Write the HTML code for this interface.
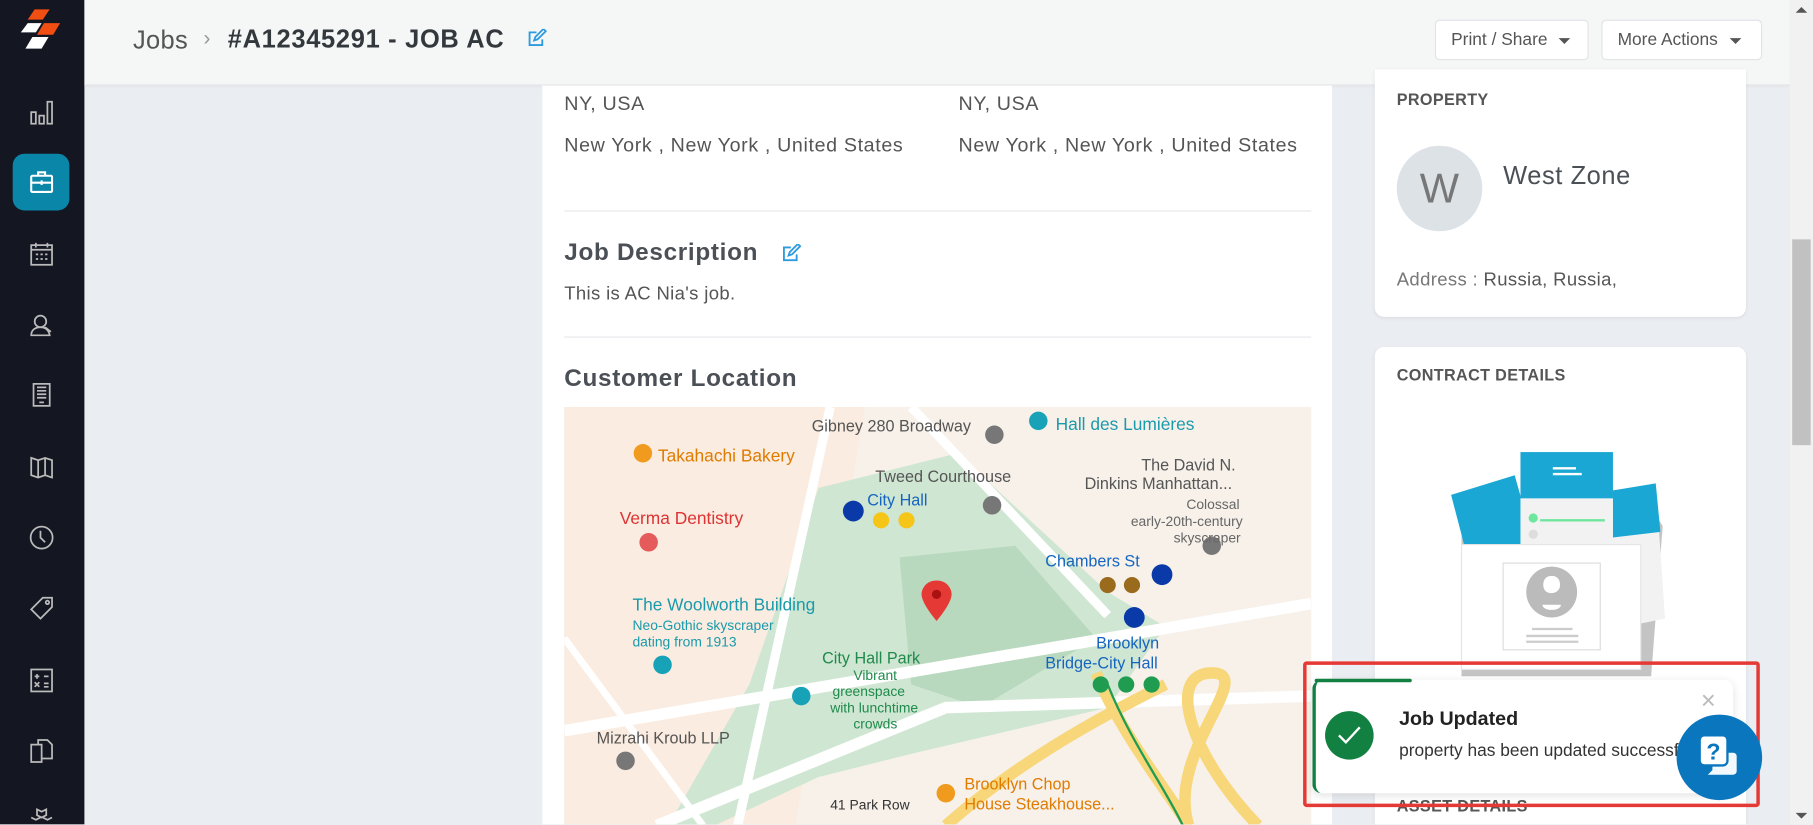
<!DOCTYPE html>
<html><head><meta charset="utf-8"><style>
*{box-sizing:border-box;margin:0;padding:0}
html,body{width:1813px;height:825px;overflow:hidden;background:#eaedf1;font-family:"Liberation Sans",sans-serif}
#o{position:relative;width:1813px;height:825px;overflow:hidden}
#w{position:absolute;left:0;top:0;width:1568px;height:713px;transform:scale(1.15625);transform-origin:0 0;background:#eaedf1;letter-spacing:.3px;overflow:hidden}
.a{position:absolute}
.sb{left:0;top:0;width:73px;height:713px;background:#141722}
.ic{position:absolute;left:25px;width:22px;height:22px}
.hd{left:73px;top:0;width:1475px;height:74px;background:#f5f6f6;border-bottom:1px solid #e2e5e8;box-shadow:0 1px 3px rgba(0,0,0,.05)}
.btn{top:17px;height:35px;background:#fff;border:1px solid #e1e3e6;border-radius:4px;font-size:15px;color:#555;line-height:33px;padding-left:13px;letter-spacing:0}
.car{display:inline-block;border-left:5px solid transparent;border-right:5px solid transparent;border-top:5px solid #555;vertical-align:middle;margin-left:10px}
.t{font-size:17px;color:#555;letter-spacing:.55px}
.h2{font-size:21px;font-weight:bold;color:#4b5056;letter-spacing:.6px}
.card{background:#fff;border-radius:8px;box-shadow:0 1px 3px rgba(0,0,0,.08)}
.ml{position:absolute;font-size:13px;white-space:nowrap;letter-spacing:0}
</style></head><body><div id="o"><div id="w">
<div class="a sb">
 <svg class="a" style="left:16px;top:8px" width="40" height="40" viewBox="0 0 40 40"><polygon points="14,0 27,0 21,9 8,9" fill="#f04e12"/><polygon points="22,12 36,12 30,22 16,22" fill="#f04e12"/><polygon points="8,12 20,12 15,20 2,20" fill="#fff"/><polygon points="12,24 26,24 20,34 6,34" fill="#fff"/></svg>
 <svg class="ic" style="top:86px" viewBox="0 0 22 22" fill="none" stroke="#bbb" stroke-width="1.5"><rect x="2" y="11" width="4" height="10"/><rect x="9" y="14" width="4" height="7"/><rect x="16" y="2" width="4" height="19"/></svg>
 <div class="a" style="left:11px;top:133px;width:49px;height:49px;background:#0a86a8;border-radius:10px"></div>
 <svg class="ic" style="top:146px;left:25px" viewBox="0 0 22 22" fill="none" stroke="#fff" stroke-width="1.8"><rect x="2" y="6" width="18" height="14" rx="1"/><path d="M8 6V3h6v3M2 12h18M11 10v4"/></svg>
 <svg class="ic" style="top:208px" viewBox="0 0 22 22" fill="none" stroke="#bbb" stroke-width="1.5"><rect x="2" y="4" width="18" height="17"/><path d="M6 2v4M16 2v4M2 8h18"/><path d="M6 12h2M10 12h2M14 12h2M6 16h2M10 16h2M14 16h2"/></svg>
 <svg class="ic" style="top:270px" viewBox="0 0 22 22" fill="none" stroke="#bbb" stroke-width="1.5"><circle cx="10" cy="8" r="5"/><path d="M2 20c0-5 4-7 8-7s7 2 8 7zM14 13l5 4"/></svg>
 <svg class="ic" style="top:330px" viewBox="0 0 22 22" fill="none" stroke="#bbb" stroke-width="1.5"><rect x="4" y="2" width="14" height="19"/><path d="M7 5h8M7 8h8M7 11h8M7 14h8M9 18h4"/></svg>
 <svg class="ic" style="top:392px" viewBox="0 0 22 22" fill="none" stroke="#bbb" stroke-width="1.5"><path d="M2 4l6 2 6-2 6 2v15l-6-2-6 2-6-2zM8 6v15M14 4v15"/></svg>
 <svg class="ic" style="top:454px" viewBox="0 0 22 22" fill="none" stroke="#bbb" stroke-width="1.5"><circle cx="11" cy="11" r="9.5"/><path d="M10 5v6l4 4"/></svg>
 <svg class="ic" style="top:515px" viewBox="0 0 22 22" fill="none" stroke="#bbb" stroke-width="1.5"><path d="M12 2h8v8L10 20 2 12z"/><circle cx="16" cy="6" r="1.5"/></svg>
 <svg class="ic" style="top:577px" viewBox="0 0 22 22" fill="none" stroke="#bbb" stroke-width="1.5"><rect x="2" y="2" width="18" height="19"/><path d="M5 8h4M7 6v4M13 8h4M5 13l4 4M9 13l-4 4M13 14h4M13 17h4"/></svg>
 <svg class="ic" style="top:638px" viewBox="0 0 22 22" fill="none" stroke="#bbb" stroke-width="1.5"><path d="M2 6h9v15H2zM8 6V2h8l4 4v12h-9"/></svg>
 <svg class="ic" style="top:698px" viewBox="0 0 22 22" fill="none" stroke="#bbb" stroke-width="1.5"><path d="M7 2l4 2 4-2v5l-4 2-4-2zM2 9l4 2 4-2M12 9l4 2 4-2"/></svg>
</div>
<div class="a hd">
 <div class="a" style="left:42px;top:22px;font-size:22px;color:#555">Jobs</div>
 <div class="a" style="left:103px;top:23px;font-size:18px;color:#999">›</div>
 <div class="a" style="left:124px;top:21px;font-size:22px;font-weight:bold;color:#33383d;letter-spacing:.6px">#A12345291 - JOB AC</div>
 <svg class="a" style="left:383px;top:25px" width="17" height="16" viewBox="0 0 17 16" fill="none" stroke="#2e9be0" stroke-width="1.6"><path d="M13 9v5H2V3h6"/><path d="M6 10l1-3 7-7 2 2-7 7z"/></svg>
</div>
<div class="a btn" style="left:1241px;width:133px">Print / Share<span class="car"></span></div>
<div class="a btn" style="left:1385px;width:139px">More Actions<span class="car"></span></div>
<div class="a" style="left:1548px;top:0;width:20px;height:713px;background:#f1f1f1"></div>
<div class="a" style="left:1550px;top:207px;width:16px;height:178px;background:#c1c1c1"></div>
<div class="a" style="left:1553px;top:6px;border-left:5px solid transparent;border-right:5px solid transparent;border-bottom:5px solid #555"></div>
<div class="a" style="left:1553px;top:703px;border-left:5px solid transparent;border-right:5px solid transparent;border-top:5px solid #555"></div>

<div class="a" style="left:469px;top:74px;width:683px;height:640px;background:#fff"></div>
<div class="a t" style="left:488px;top:80px">NY, USA</div>
<div class="a t" style="left:829px;top:80px">NY, USA</div>
<div class="a t" style="left:488px;top:116px">New York , New York , United States</div>
<div class="a t" style="left:829px;top:116px">New York , New York , United States</div>
<div class="a" style="left:488px;top:182px;width:646px;height:1px;background:#e6e8ea"></div>
<div class="a h2" style="left:488px;top:207px">Job Description</div>
<svg class="a" style="left:676px;top:211px" width="17" height="16" viewBox="0 0 17 16" fill="none" stroke="#2e9be0" stroke-width="1.6"><path d="M13 9v5H2V3h6"/><path d="M6 10l1-3 7-7 2 2-7 7z"/></svg>
<div class="a" style="left:488px;top:246px;font-size:16px;color:#555">This is AC Nia's job.</div>
<div class="a" style="left:488px;top:291px;width:646px;height:1px;background:#e6e8ea"></div>
<div class="a h2" style="left:488px;top:316px">Customer Location</div>

<div class="a" style="left:488px;top:352px;width:646px;height:362px;background:#f3eee8;overflow:hidden">
 <svg class="a" style="left:0;top:0" width="646" height="362">
  <rect width="646" height="362" fill="#f7f1ea"/>
  <polygon points="0,0 260,0 200,362 0,362" fill="#fbe9d8" opacity=".6"/>
  <polygon points="220,70 340,40 470,160 520,190 470,260 300,300 220,320 130,362 90,362 160,240" fill="#cfe6d2"/>
  <polygon points="290,130 390,120 460,200 360,260 300,240" fill="#b9d9bf"/>
  <path d="M0,280 L646,170" stroke="#fff" stroke-width="10"/>
  <path d="M80,362 L330,260 L646,250" stroke="#fff" stroke-width="10" fill="none"/>
  <path d="M230,0 L150,362" stroke="#fff" stroke-width="8"/>
  <path d="M300,0 L470,180" stroke="#fff" stroke-width="8"/>
  <path d="M0,200 L120,362" stroke="#fff" stroke-width="6"/>
  <path d="M330,362 C400,300 480,260 520,240" stroke="#f7d77a" stroke-width="10" fill="none"/>
  <path d="M540,362 C520,300 600,230 560,230 C520,230 540,300 600,362" stroke="#f7d77a" stroke-width="10" fill="none"/>
  <path d="M460,230 C480,280 520,330 540,362" stroke="#f7d77a" stroke-width="10" fill="none"/>
  <path d="M470,240 C490,290 520,330 535,362" stroke="#1f9c50" stroke-width="2" fill="none"/>
  <path d="M322,150 c-9,0-13,7-13,12 0,8 13,23 13,23s13-15 13-23c0-5-4-12-13-12z" fill="#e53935"/>
  <circle cx="322" cy="162" r="4" fill="#a11"/>
  <circle cx="68" cy="40" r="8" fill="#f09a1e"/><circle cx="73" cy="117" r="8" fill="#e55a5a"/>
  <circle cx="85" cy="223" r="8" fill="#17a2b8"/><circle cx="205" cy="250" r="8" fill="#17a2b8"/>
  <circle cx="53" cy="306" r="8" fill="#777"/><circle cx="372" cy="24" r="8" fill="#777"/><circle cx="370" cy="85" r="8" fill="#777"/>
  <circle cx="410" cy="12" r="8" fill="#17a2b8"/><circle cx="560" cy="120" r="8" fill="#777"/><circle cx="330" cy="334" r="8" fill="#f09a1e"/>
  <circle cx="250" cy="90" r="9" fill="#0a3aa8"/><circle cx="274" cy="98" r="7" fill="#f5c518"/><circle cx="296" cy="98" r="7" fill="#f5c518"/>
  <circle cx="470" cy="154" r="7" fill="#9a6a1d"/><circle cx="491" cy="154" r="7" fill="#9a6a1d"/><circle cx="517" cy="145" r="9" fill="#0a3aa8"/><circle cx="493" cy="182" r="9" fill="#0a3aa8"/>
  <circle cx="464" cy="240" r="7" fill="#1f9c50"/><circle cx="486" cy="240" r="7" fill="#1f9c50"/><circle cx="508" cy="240" r="7" fill="#1f9c50"/>
 </svg>
 <div class="ml" style="left:81px;top:34px;color:#e07b00;font-size:15px">Takahachi Bakery</div>
 <div class="ml" style="left:214px;top:8px;color:#555;font-size:14px">Gibney 280 Broadway</div>
 <div class="ml" style="left:425px;top:7px;color:#1a9aab;font-size:15px">Hall des Lumières</div>
 <div class="ml" style="left:269px;top:52px;color:#555;font-size:14px">Tweed Courthouse</div>
 <div class="ml" style="left:262px;top:72px;color:#1565c0;font-size:14px">City Hall</div>
 <div class="ml" style="left:499px;top:42px;color:#555;font-size:14px">The David N.</div>
 <div class="ml" style="left:450px;top:58px;color:#555;font-size:14px">Dinkins Manhattan...</div>
 <div class="ml" style="left:538px;top:77px;color:#666;font-size:12px">Colossal</div>
 <div class="ml" style="left:490px;top:92px;color:#666;font-size:12px">early-20th-century</div>
 <div class="ml" style="left:527px;top:106px;color:#666;font-size:12px">skyscraper</div>
 <div class="ml" style="left:48px;top:88px;color:#d33;font-size:15px">Verma Dentistry</div>
 <div class="ml" style="left:416px;top:125px;color:#1565c0;font-size:14px">Chambers St</div>
 <div class="ml" style="left:59px;top:163px;color:#1a9aab;font-size:15px">The Woolworth Building</div>
 <div class="ml" style="left:59px;top:182px;color:#1a9aab;font-size:12px">Neo-Gothic skyscraper</div>
 <div class="ml" style="left:59px;top:196px;color:#1a9aab;font-size:12px">dating from 1913</div>
 <div class="ml" style="left:460px;top:196px;color:#1565c0;font-size:14px">Brooklyn</div>
 <div class="ml" style="left:416px;top:213px;color:#1565c0;font-size:14px">Bridge-City Hall</div>
 <div class="ml" style="left:223px;top:209px;color:#1f8a4c;font-size:14px">City Hall Park</div>
 <div class="ml" style="left:250px;top:225px;color:#1f8a4c;font-size:12px">Vibrant</div>
 <div class="ml" style="left:232px;top:239px;color:#1f8a4c;font-size:12px">greenspace</div>
 <div class="ml" style="left:230px;top:253px;color:#1f8a4c;font-size:12px">with lunchtime</div>
 <div class="ml" style="left:250px;top:267px;color:#1f8a4c;font-size:12px">crowds</div>
 <div class="ml" style="left:28px;top:278px;color:#555;font-size:14px">Mizrahi Kroub LLP</div>
 <div class="ml" style="left:230px;top:337px;color:#333;font-size:12px">41 Park Row</div>
 <div class="ml" style="left:346px;top:318px;color:#e07b00;font-size:14px">Brooklyn Chop</div>
 <div class="ml" style="left:346px;top:335px;color:#e07b00;font-size:14px">House Steakhouse...</div>
</div>

<div class="a card" style="left:1189px;top:60px;width:321px;height:214px;border-radius:0 0 8px 8px"></div>
<div class="a" style="left:1208px;top:78px;font-size:14px;font-weight:bold;color:#555">PROPERTY</div>
<div class="a" style="left:1208px;top:126px;width:74px;height:74px;border-radius:50%;background:#dde2e7;color:#777;font-size:36px;text-align:center;line-height:74px">W</div>
<div class="a" style="left:1300px;top:139px;font-size:22px;color:#4b5056;letter-spacing:.5px">West Zone</div>
<div class="a" style="left:1208px;top:234px;font-size:16px;color:#555"><span style="color:#777">Address :</span> Russia, Russia,</div>
<div class="a card" style="left:1189px;top:300px;width:321px;height:430px"></div>
<div class="a" style="left:1208px;top:316px;font-size:14px;font-weight:bold;color:#555">CONTRACT DETAILS</div>
<svg class="a" style="left:1250px;top:385px" width="195" height="200" viewBox="0 0 195 200">
 <polygon points="14,57 180,57 188,70 178,200 14,200" fill="#c4c4c4"/>
 <polygon points="5,43 60,26 78,90 22,108" fill="#1aa7d4"/>
 <polygon points="140,40 182,33 190,150 150,158" fill="#f2f2f2"/><polygon points="140,40 182,33 186,75 144,80" fill="#1aa7d4"/>
 <rect x="65" y="6" width="80" height="130" fill="#f2f2f2"/><rect x="65" y="6" width="80" height="40" fill="#1aa7d4"/>
 <path d="M93 20h20M93 25h25" stroke="#fff" stroke-width="2"/>
 <circle cx="76" cy="63" r="4" fill="#6ee79d"/><path d="M82 65h56" stroke="#6ee79d" stroke-width="2"/><circle cx="76" cy="77" r="4" fill="#ddd"/>
 <rect x="14" y="86" width="155" height="108" fill="#fff" stroke="#e5e5e5"/>
 <rect x="50" y="102" width="84" height="75" fill="#fff" stroke="#ddd"/>
 <circle cx="92" cy="127" r="22" fill="#bbb"/><path d="M92 113c-6 0-8 5-7 10 1 4 4 5 7 5s6-2 7-5c1-5-1-10-7-10zM84 138c0 6 16 6 16 0" fill="#fff"/>
 <path d="M75 159h35M70 165h45M70 170h45" stroke="#ccc" stroke-width="2"/>
</svg>
<div class="a" style="left:1208px;top:689px;font-size:14px;font-weight:bold;color:#555">ASSET DETAILS</div>

<div class="a" style="left:1127px;top:572px;width:395px;height:126px;border:3px solid #e53935;border-radius:3px"></div>
<div class="a" style="left:1135px;top:588px;width:364px;height:98px;background:#fff;border-radius:8px;border-left:3px solid #128040;box-shadow:0 2px 8px rgba(0,0,0,.12)"></div>
<div class="a" style="left:1137px;top:587px;width:84px;height:3px;background:#128040;border-radius:2px"></div>
<div class="a" style="left:1146px;top:615px;width:42px;height:42px;border-radius:50%;background:#128040"></div>
<svg class="a" style="left:1155px;top:625px" width="24" height="22" viewBox="0 0 24 22" fill="none" stroke="#fff" stroke-width="2"><path d="M3 11l6 6L21 4"/></svg>
<div class="a" style="left:1210px;top:612px;font-size:17px;font-weight:bold;color:#222;letter-spacing:0">Job Updated</div>
<div class="a" style="left:1210px;top:641px;font-size:15px;color:#333;white-space:nowrap;width:260px;overflow:hidden;letter-spacing:0">property has been updated successfully</div>
<div class="a" style="left:1471px;top:593px;font-size:22px;color:#bbb">×</div>
<div class="a" style="left:1450px;top:618px;width:74px;height:74px;border-radius:50%;background:#0a76be"></div>
<svg class="a" style="left:1467px;top:633px" width="40" height="42" viewBox="0 0 40 42"><path d="M14 18h18a3 3 0 0 1 3 3v13a3 3 0 0 1-3 3H10l4-4z" fill="#fff" opacity=".95"/><rect x="3" y="3" width="24" height="26" rx="4" fill="#fff" stroke="#0a76be" stroke-width="2"/><text x="15" y="24" font-family="Liberation Sans" font-weight="bold" font-size="20" fill="#0a76be" text-anchor="middle">?</text></svg>
</div></div></body></html>
